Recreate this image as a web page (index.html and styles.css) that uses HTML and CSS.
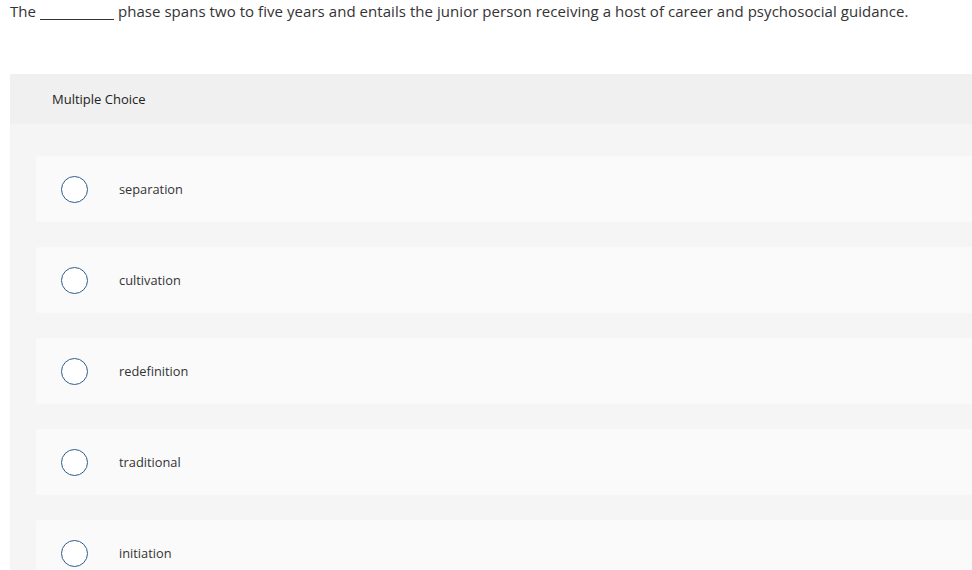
FILE: index.html
```html
<!DOCTYPE html>
<html>
<head>
<meta charset="utf-8">
<link rel="stylesheet" href="styles.css">
</head>
<body>
<div class="page">
  <p class="question">The <span class="blank"></span> phase spans two to five years and entails the junior person receiving a host of career and psychosocial guidance.</p>
  <section class="mc">
    <header class="mc-head">Multiple Choice</header>
    <div class="mc-body">
      <label class="option"><span class="radio"></span><span class="opt-text">separation</span></label>
      <label class="option"><span class="radio"></span><span class="opt-text">cultivation</span></label>
      <label class="option"><span class="radio"></span><span class="opt-text">redefinition</span></label>
      <label class="option"><span class="radio"></span><span class="opt-text">traditional</span></label>
      <label class="option"><span class="radio"></span><span class="opt-text">initiation</span></label>
    </div>
  </section>
</div>
</body>
</html>
```

FILE: styles.css
```css
html, body {
  margin: 0;
  padding: 0;
  background: #fff;
  overflow: hidden;
}
.page {
  width: 1000px;
  padding-left: 10px;
  font-family: "Open Sans", "Liberation Sans", sans-serif;
  color: #333;
}
.question {
  margin: 0;
  padding-top: 2px;
  font-size: 15px;
  line-height: 19px;
  letter-spacing: 0.05px;
  color: #333;
  white-space: nowrap;
}
.blank {
  display: inline-block;
  width: 74px;
  border-bottom: 1px solid #333;
  vertical-align: -3px;
}
.mc {
  margin-top: 53px;
}
.mc-head {
  height: 50px;
  background: #f0f0f0;
  padding-left: 42px;
  display: flex;
  align-items: center;
  font-size: 13px;
  color: #222;
}
.mc-body {
  background: #f5f5f5;
  padding: 32px 0 0 26px;
  display: flex;
  flex-direction: column;
  gap: 25px;
}
.option {
  height: 66px;
  background: #fafafa;
  border-radius: 3px;
  display: flex;
  align-items: center;
  padding-left: 25px;
}
.radio {
  width: 25px;
  height: 25px;
  border: 1.5px solid #2d5e8c;
  border-radius: 50%;
  background: #fff;
  flex: none;
}
.opt-text {
  margin-left: 31px;
  font-size: 12.8px;
  color: #333;
}
```
